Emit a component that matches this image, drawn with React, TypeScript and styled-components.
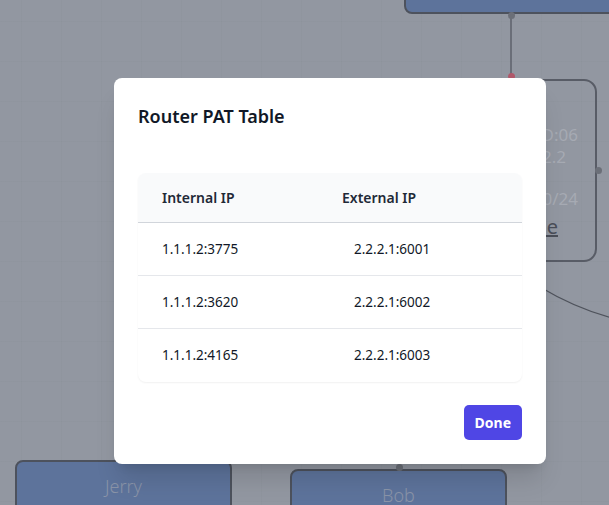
import * as React from "react";
import styled, { createGlobalStyle } from "styled-components";

const GlobalStyle = createGlobalStyle`
  html, body {
    margin: 0;
    padding: 0;
    width: 609px;
    height: 505px;
    overflow: hidden;
    font-family: "Noto Sans", "Open Sans", sans-serif;
  }
`;

type PatRow = { internal: string; external: string };

const rows: PatRow[] = [
  { internal: "1.1.1.2:3775", external: "2.2.2.1:6001" },
  { internal: "1.1.1.2:3620", external: "2.2.2.1:6002" },
  { internal: "1.1.1.2:4165", external: "2.2.2.1:6003" },
];

export default function App() {
  return (
    <>
      <GlobalStyle />
      <Canvas>
        <NodeBox left={404} top={-30} width={230} height={44} />
        <Wires width="609" height="505">
          <line x1="511" y1="15" x2="511" y2="76" stroke="#5d616b" strokeWidth="1.5" />
          <path d="M540 287 Q 575 308 612 318" fill="none" stroke="#4f535c" strokeWidth="1.2" />
        </Wires>
        <Dot left={511} top={15} color="#6b6f78" />
        <Dot left={511} top={76} color="#b0586a" />
        <RouterNode>
          <NodeLine underline inset={50}>Router</NodeLine>
          <NodeLine inset={17}>MAC: 00:1A:2B:3C:4D:06</NodeLine>
          <NodeLine inset={29}>IP: 2.2.2.2</NodeLine>
          <NodeLine inset={17} gap={20}>Subnet: 2.2.2.0/24</NodeLine>
          <NodeLink>PAT Table</NodeLink>
        </RouterNode>
        <Dot left={598} top={170} color="#6b6f78" />

        <NodeBox left={15} top={460} width={217} height={70}>
          <NodeLabel>Jerry</NodeLabel>
        </NodeBox>
        <NodeBox left={290} top={469} width={217} height={70}>
          <NodeLabel>Bob</NodeLabel>
        </NodeBox>
        <Dot left={399} top={467} color="#6b6f78" />

        <Overlay>
          <Modal>
            <Title>Router PAT Table</Title>
            <Table>
              <HeaderRow>
                <HeadCell>Internal IP</HeadCell>
                <HeadCell>External IP</HeadCell>
              </HeaderRow>
              {rows.map((r, i) => (
                <DataRow key={r.internal} last={i === rows.length - 1}>
                  <Cell>{r.internal}</Cell>
                  <Cell>{r.external}</Cell>
                </DataRow>
              ))}
            </Table>
            <Footer>
              <DoneButton>Done</DoneButton>
            </Footer>
          </Modal>
        </Overlay>
      </Canvas>
    </>
  );
}

const Canvas = styled.div`
  position: relative;
  width: 609px;
  height: 505px;
  overflow: hidden;
  background-color: #9297a1;
  background-image:
    linear-gradient(to right, rgba(80, 86, 98, 0.035) 1px, transparent 1px),
    linear-gradient(to bottom, rgba(80, 86, 98, 0.035) 1px, transparent 1px);
  background-size: 40px 40px;
  background-position: 21px 21px;
`;

const Wires = styled.svg`
  position: absolute;
  left: 0;
  top: 0;
`;

const NodeBox = styled.div<{ left: number; top: number; width: number; height: number }>`
  position: absolute;
  left: ${p => p.left}px;
  top: ${p => p.top}px;
  width: ${p => p.width}px;
  height: ${p => p.height}px;
  box-sizing: border-box;
  background: #5d739b;
  border: 2px solid #4d525d;
  border-radius: 8px;
  display: flex;
  justify-content: center;
`;

const NodeLabel = styled.div`
  margin-top: 12px;
  font-size: 18px;
  font-weight: 300;
  color: #8a94a8;
`;

const Dot = styled.div<{ left: number; top: number; color: string }>`
  position: absolute;
  left: ${p => p.left - 3.5}px;
  top: ${p => p.top - 3.5}px;
  width: 7px;
  height: 7px;
  border-radius: 50%;
  background: ${p => p.color};
`;

const RouterNode = styled.div`
  position: absolute;
  left: 360px;
  top: 79px;
  width: 237px;
  height: 183px;
  box-sizing: border-box;
  border: 2px solid #585c66;
  border-radius: 13px;
  display: flex;
  flex-direction: column;
  align-items: flex-end;
  padding-top: 21px;
  color: #a6aab3;
  font-size: 17px;
  line-height: 22px;
  white-space: nowrap;
`;

const NodeLine = styled.div<{ inset?: number; gap?: number; underline?: boolean }>`
  margin-right: ${p => p.inset ?? 50}px;
  margin-top: ${p => p.gap ?? 0}px;
  text-decoration: ${p => (p.underline ? "underline" : "none")};
  color: ${p => (p.underline ? "#4a4e58" : "#a6aab3")};
`;

const NodeLink = styled.div`
  margin-right: 37px;
  margin-top: 4px;
  font-size: 20px;
  line-height: 26px;
  color: #4a4e58;
  text-decoration: underline;
`;

const Overlay = styled.div`
  position: absolute;
  inset: 0;
  padding: 78px 0 0 114px;
  box-sizing: border-box;
`;

const Modal = styled.div`
  width: 432px;
  box-sizing: border-box;
  background: #ffffff;
  border-radius: 8px;
  padding: 24px;
  box-shadow: 0 20px 25px -5px rgba(0, 0, 0, 0.12), 0 8px 10px -6px rgba(0, 0, 0, 0.1);
`;

const Title = styled.h3`
  margin: 0;
  font-size: 18px;
  line-height: 28px;
  font-weight: 600;
  color: #111827;
`;

const Table = styled.div`
  margin-top: 43px;
  border-radius: 8px;
  overflow: hidden;
  box-shadow: 0 1px 2px rgba(0, 0, 0, 0.06);
`;

const HeaderRow = styled.div`
  display: grid;
  grid-template-columns: 180px 1fr;
  height: 49px;
  align-items: center;
  background: #f9fafb;
  border-bottom: 1px solid #d1d5db;
  padding-left: 24px;
`;

const HeadCell = styled.div`
  font-size: 14px;
  font-weight: 600;
  color: #1f2937;
`;

const DataRow = styled.div<{ last: boolean }>`
  display: grid;
  grid-template-columns: 192px 1fr;
  height: 52px;
  align-items: center;
  padding-left: 24px;
  border-bottom: 1px solid ${p => (p.last ? "transparent" : "#e5e7eb")};
`;

const Cell = styled.div`
  font-size: 13.5px;
  color: #111827;
`;

const Footer = styled.div`
  display: flex;
  justify-content: flex-end;
  margin-top: 23px;
`;

const DoneButton = styled.button`
  height: 35px;
  padding: 0 11px;
  border: none;
  border-radius: 5px;
  background: #4f46e5;
  color: #ffffff;
  font-family: "Noto Sans", "Open Sans", sans-serif;
  font-size: 14px;
  font-weight: 700;
`;
